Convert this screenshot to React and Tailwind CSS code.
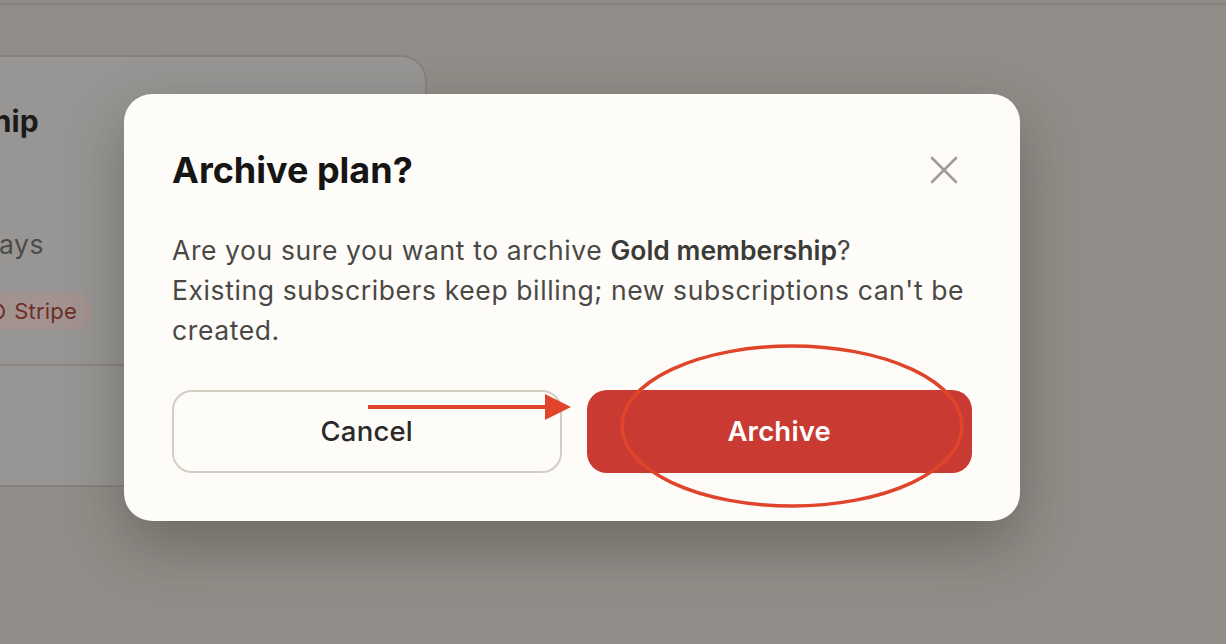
import React from "react";

export default function App() {
  return (
    <div
      className="relative w-[1226px] h-[644px] overflow-hidden bg-[#918e89]"
      style={{ fontFamily: "Inter, 'Noto Sans', sans-serif" }}
    >
      {/* underlying page (dimmed) */}
      <div className="h-[5px] border-b-2 border-[#84817c]" />
      <div className="pt-[50px]">
        <div className="ml-[-200px] w-[627px] h-[432px] rounded-r-[26px] border-2 border-l-0 border-[#86837f] bg-[#979694] flex flex-col">
          <div className="pl-[200px] pt-[44px] flex flex-col">
            <div className="w-[39px] flex justify-end whitespace-nowrap text-[30px] leading-[40px] font-bold tracking-[0.2px] text-[#1b1a19]">
              Gold membership
            </div>
            <div className="mt-[85px] w-[44px] flex justify-end whitespace-nowrap text-[26.5px] leading-[36px] tracking-[0.5px] text-[#4d4b48]">
              Billed every 30 days
            </div>
            <div className="mt-[30px] w-[93px] flex justify-end">
              <div className="flex items-center gap-[9px] whitespace-nowrap rounded-full bg-[#a39390] h-[38px] pl-[14px] pr-[16px] text-[22px] tracking-[0.2px] text-[#6e2f28]">
                <span className="inline-block w-[17px] h-[17px] rounded-full border-2 border-[#6e2f28]" />
                Stripe
              </div>
            </div>
          </div>
          <div className="mt-[34px] border-t-2 border-[#898682]" />
        </div>
      </div>

      {/* modal */}
      <div className="absolute inset-0 pl-[124px] pt-[94px]">
        <div className="w-[896px] rounded-[28px] bg-[#fdfcf9] px-[48px] pt-[48px] pb-[48px] shadow-[0_24px_60px_rgba(40,36,30,0.35)]">
          <div className="flex items-center justify-between h-[56px]">
            <h2 className="text-[36px] font-bold leading-[56px] text-[#161514] tracking-[0px]">
              Archive plan?
            </h2>
            <button className="w-[40px] h-[40px] flex items-center justify-center mr-[8px]">
              <svg width="28" height="28" viewBox="0 0 28 28" fill="none">
                <path d="M2 2 L26 26 M26 2 L2 26" stroke="#a09d92" strokeWidth="2.6" strokeLinecap="round" />
              </svg>
            </button>
          </div>
          <p className="mt-[32px] text-[26.5px] leading-[40px] text-[#4a4845] tracking-[0.6px] whitespace-nowrap">
            Are you sure you want to archive{" "}
            <span className="font-semibold tracking-[0px] text-[#3c3a37]">Gold membership</span>?
            <br />
            Existing subscribers keep billing; new subscriptions can't be
            <br />
            created.
          </p>
          <div className="mt-[40px] flex gap-[25px]">
            <button className="flex-1 h-[83px] rounded-[20px] border-2 border-[#d2cec2] bg-[#fdfcf9] text-[27.5px] font-medium tracking-[0.2px] text-[#2a2927]">
              Cancel
            </button>
            <button className="flex-1 h-[83px] rounded-[20px] bg-[#c93a32] text-[27.5px] font-semibold tracking-[0.2px] text-white">
              Archive
            </button>
          </div>
        </div>
      </div>

      {/* annotations */}
      <svg className="absolute inset-0 pointer-events-none" width="1226" height="644" viewBox="0 0 1226 644">
        <line x1="368" y1="407" x2="548" y2="407" stroke="#e0452c" strokeWidth="4" />
        <polygon points="545,394 571,407 545,420" fill="#e0452c" />
        <ellipse cx="792" cy="426" rx="170" ry="80" fill="none" stroke="#e0452c" strokeWidth="3.5" />
      </svg>
    </div>
  );
}
